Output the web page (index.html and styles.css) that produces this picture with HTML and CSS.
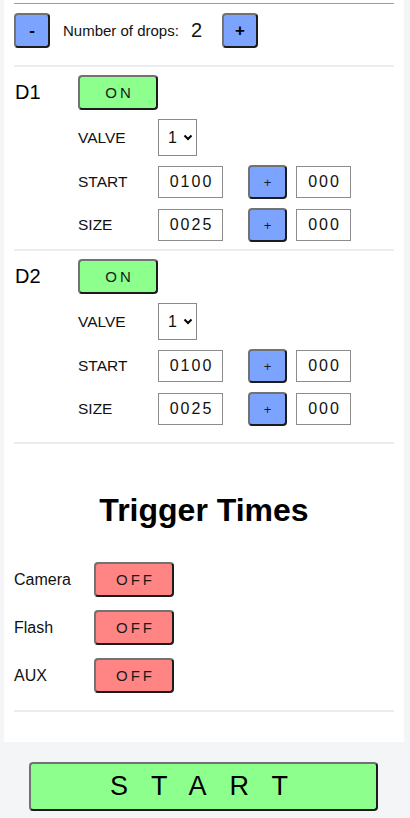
FILE: index.html
```html
<!DOCTYPE html>
<html lang="en">
<head>
<meta charset="utf-8">
<title>Drops</title>
<link rel="stylesheet" href="styles.css">
</head>
<body>
<div class="panel">
  <div class="rule-top"></div>
  <div class="drops-row">
    <button class="btn blue sq">-</button>
    <span class="drops-label">Number of drops:</span>
    <span class="drops-count">2</span>
    <button class="btn blue sq sq-plus">+</button>
  </div>
  <div class="rule"></div>

  <section class="drop">
    <div class="drop-name">D1</div>
    <div class="drop-body">
      <button class="btn green toggle">ON</button>
      <div class="field valve"><span class="lbl">VALVE</span><div class="select"><span>1</span><svg width="10" height="7" viewBox="0 0 10 7"><path d="M1.5 1.5 L5 5 L8.5 1.5" fill="none" stroke="#000" stroke-width="2"/></svg></div></div>
      <div class="field"><span class="lbl">START</span><input class="num" value="0100"><button class="btn blue plus">+</button><input class="num short" value="000"></div>
      <div class="field"><span class="lbl">SIZE</span><input class="num" value="0025"><button class="btn blue plus">+</button><input class="num short" value="000"></div>
    </div>
  </section>
  <div class="rule"></div>

  <section class="drop last">
    <div class="drop-name">D2</div>
    <div class="drop-body">
      <button class="btn green toggle">ON</button>
      <div class="field valve"><span class="lbl">VALVE</span><div class="select"><span>1</span><svg width="10" height="7" viewBox="0 0 10 7"><path d="M1.5 1.5 L5 5 L8.5 1.5" fill="none" stroke="#000" stroke-width="2"/></svg></div></div>
      <div class="field"><span class="lbl">START</span><input class="num" value="0100"><button class="btn blue plus">+</button><input class="num short" value="000"></div>
      <div class="field"><span class="lbl">SIZE</span><input class="num" value="0025"><button class="btn blue plus">+</button><input class="num short" value="000"></div>
    </div>
  </section>
  <div class="rule"></div>

  <h2 class="trigger-title">Trigger Times</h2>
  <div class="triggers">
    <div class="trow"><span class="tlbl">Camera</span><button class="btn red toggle">OFF</button></div>
    <div class="trow"><span class="tlbl">Flash</span><button class="btn red toggle">OFF</button></div>
    <div class="trow"><span class="tlbl">AUX</span><button class="btn red toggle">OFF</button></div>
  </div>
  <div class="rule rule-end"></div>
</div>
<button class="btn green start">START</button>
</body>
</html>
```

FILE: styles.css
```css
* { box-sizing: border-box; }
html, body { margin: 0; padding: 0; }
body {
  background: #f4f5f7;
  font-family: "Liberation Sans", Arial, sans-serif;
  color: #111;
  width: 410px;
  height: 818px;
  overflow: hidden;
}
.panel {
  width: 400px;
  margin-left: 4px;
  background: #fff;
  padding: 3px 10px 30px;
}
.rule-top { height: 1px; background: #9c9c9c; }
.rule { height: 2px; background: #ececee; }

.btn {
  font-family: "Liberation Sans", Arial, sans-serif;
  font-weight: 400;
  border: 2px solid;
  border-color: #727272 #1c1c1c #1c1c1c #727272;
  border-radius: 4px;
  padding: 0;
  color: #1a1a1a;
  display: flex;
  align-items: center;
  justify-content: center;
}
.blue { background: #7ca4ff; }
.green { background: #8cff8c; }
.red { background: #ff8585; }

.drops-row {
  display: flex;
  align-items: center;
  height: 35px;
  margin: 9px 0 17px;
}
.sq { width: 36px; height: 35px; font-size: 17px; font-weight: bold; color: #000; }
.drops-label { margin-left: 13px; font-size: 15px; }
.drops-count { margin-left: 12px; font-size: 20px; }
.sq-plus { margin-left: 20px; }

.drop { display: flex; padding: 8px 0 7px; }
.drop.last { padding-bottom: 16px; }
.drop-name { width: 64px; font-size: 20px; line-height: 35px; padding-left: 1px; color: #000; }
.drop-body { display: flex; flex-direction: column; gap: 9px; }
.toggle { width: 80px; height: 35px; font-size: 15px; letter-spacing: 3px; padding-left: 3px; }
.field { display: flex; align-items: center; height: 34px; }
.field.valve { height: 37px; }
.lbl { width: 80px; font-size: 15.5px; }
.select {
  width: 39px;
  height: 37px;
  border: 1px solid #8a8a8a;
  display: flex;
  align-items: center;
  padding-left: 9px;
  gap: 6px;
  font-size: 16px;
}
.num {
  width: 65px;
  height: 32px;
  border: 1px solid #8c8c8c;
  font: 16px "Liberation Sans", Arial, sans-serif;
  letter-spacing: 2px;
  text-align: center;
  padding: 0 0 0 2px;
  color: #111;
  outline: none;
}
.plus { width: 39px; height: 34px; margin-left: 25px; font-size: 13px; }
.num.short { width: 55px; margin-left: 9px; }

.trigger-title {
  margin: 48px 0 0;
  font-size: 32px;
  font-weight: bold;
  text-align: center;
  line-height: 37px;
  color: #000;
}
.triggers { display: flex; flex-direction: column; gap: 13px; margin-top: 33px; }
.trow { display: flex; align-items: center; height: 35px; }
.tlbl { width: 80px; font-size: 16px; }
.rule-end { margin-top: 17px; }

.start {
  margin: 20px 0 0 29px;
  width: 349px;
  height: 49px;
  font-size: 27px;
  letter-spacing: 23px;
  padding-left: 14px;
  color: #000;
}
```
